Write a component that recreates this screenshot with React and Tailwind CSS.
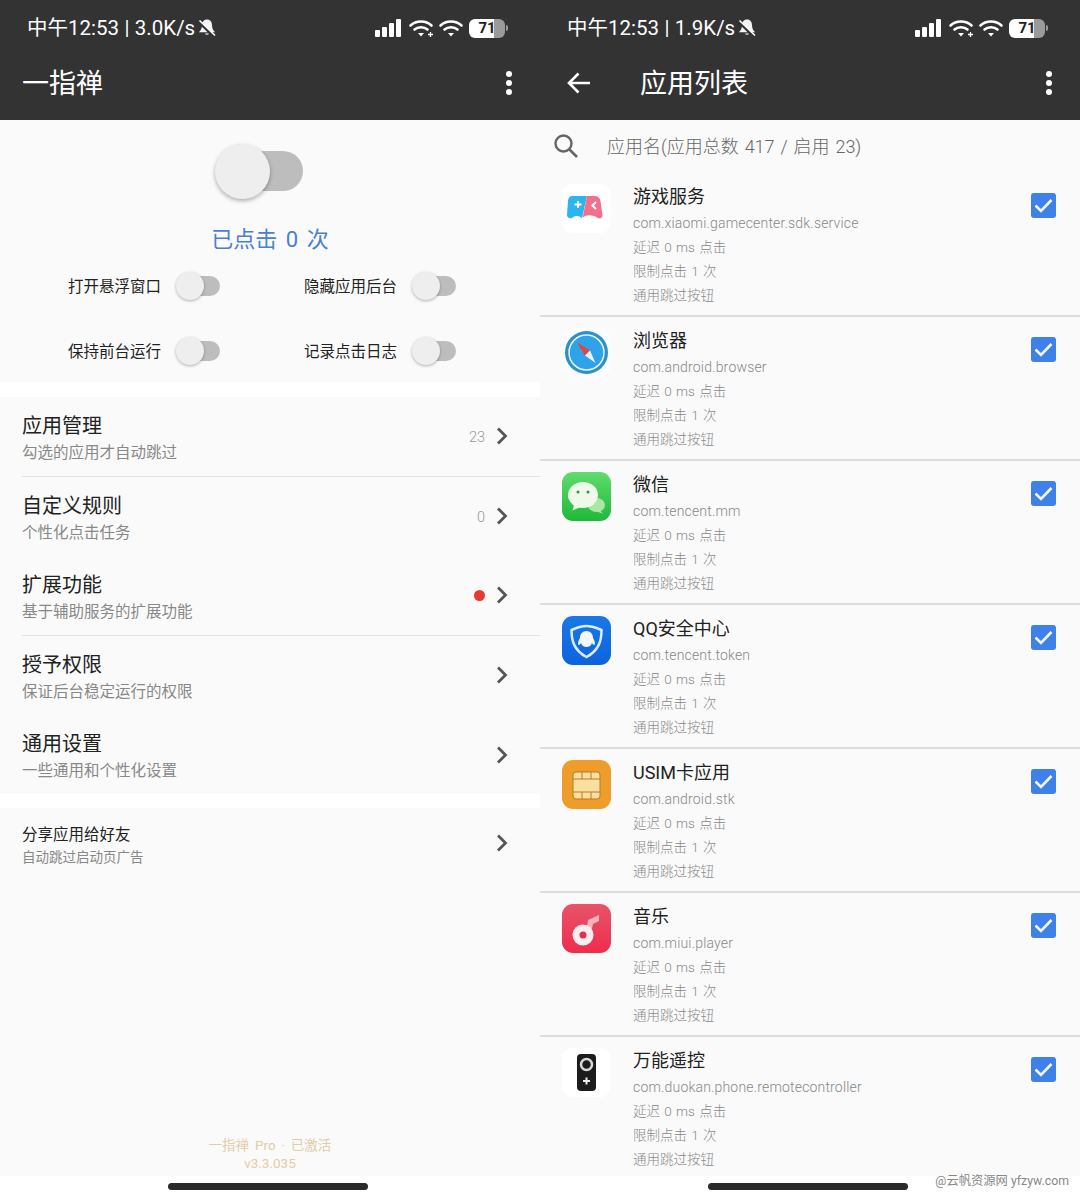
import React from "react";

const Dots = () => (
  <div className="flex flex-col gap-[3px]">
    <div className="w-[6px] h-[6px] rounded-full bg-white" />
    <div className="w-[6px] h-[6px] rounded-full bg-white" />
    <div className="w-[6px] h-[6px] rounded-full bg-white" />
  </div>
);

const MuteBell = () => (
  <svg width="20" height="20" viewBox="0 0 20 20" className="ml-[2px]">
    <path d="M10 1.500c-3.400 0-5 2.700-5 5.800 0 3.400-1.500 5.300-3.200 6.900h16.400c-1.700-1.600-3.200-3.500-3.200-6.900 0-3.100-1.600-5.800-5-5.800z" fill="#f4f4f4" />
    <path d="M7.800 15.400a2.400 2.400 0 0 0 4.400 0z" fill="#f4f4f4" />
    <path d="M2 4 L17 18.500" stroke="#333" strokeWidth="3" />
    <path d="M2.500 2.500 L18 17.500" stroke="#fff" strokeWidth="1.600" />
  </svg>
);

const Wifi = ({ plus }) => (
  <svg width="26" height="20" viewBox="0 0 26 20" fill="none">
    <path d="M2.500 7.500C8 2.200 18 2.200 23.500 7.500" stroke="#fff" strokeWidth="2.600" strokeLinecap="round" />
    <path d="M6.500 11.500C10 8.400 16 8.400 19.500 11.500" stroke="#fff" strokeWidth="2.600" strokeLinecap="round" />
    <path d="M10 15h6l-3 3.600z" fill="#fff" />
    {plus && <path d="M20 16.500h5M22.500 14v5" stroke="#fff" strokeWidth="1.300" />}
  </svg>
);

const Signal = () => (
  <div className="flex items-end gap-[2px] h-[18px] mr-[3px]">
    <div className="w-[5px] h-[7px] bg-white rounded-[1px]" />
    <div className="w-[5px] h-[10px] bg-white rounded-[1px]" />
    <div className="w-[5px] h-[14px] bg-white rounded-[1px]" />
    <div className="w-[5px] h-[18px] bg-white rounded-[1px]" />
  </div>
);

const StatusBar = ({ speed }) => (
  <div className="flex items-center h-[55px] pl-[27px] pr-[32px] pt-[1px]">
    <span className="text-[20.500px] leading-none text-white [word-spacing:0.300px]">中午12:53 | {speed}</span>
    <MuteBell />
    <div className="ml-auto flex items-center gap-[4px]">
      <Signal />
      <Wifi plus />
      <Wifi />
      <div className="flex items-center justify-center w-[36px] h-[19px] rounded-[6px] bg-[linear-gradient(90deg,#fff_70%,#9a9a9a_70%)] ml-[1px]">
        <span className="text-[15px] leading-none font-bold text-[#222]">71</span>
      </div>
      <div className="w-[2px] h-[6px] -ml-[3px] rounded-r-full bg-[#9a9a9a]" />
    </div>
  </div>
);

const Toggle = ({ big }) =>
  big ? (
    <div className="relative w-[88px] h-[56px] flex items-center">
      <div className="absolute right-0 w-[60px] h-[40px] rounded-full bg-[#bdbdbd]" />
      <div className="absolute left-0 w-[55px] h-[55px] rounded-full bg-[#eeeeee] shadow-[0_2px_4px_rgba(0,0,0,0.3)]" />
    </div>
  ) : (
    <div className="relative w-[44px] h-[28px] flex items-center">
      <div className="absolute right-0 w-[30px] h-[20px] rounded-full bg-[#bdbdbd]" />
      <div className="absolute left-0 w-[28px] h-[28px] rounded-full bg-[#eeeeee] shadow-[0_1px_3px_rgba(0,0,0,0.3)]" />
    </div>
  );

const Option = ({ label }) => (
  <div className="flex items-center h-[28px]">
    <span className="w-[108px] mt-[3px] text-[15.500px] leading-none text-[#222]">{label}</span>
    <Toggle />
  </div>
);

const Chevron = () => (
  <svg width="12" height="18" viewBox="0 0 12 18" fill="none">
    <path d="M2 1.500 L9.500 9 L2 16.500" stroke="#555" strokeWidth="2.800" />
  </svg>
);

const MenuRow = ({ title, sub, right, border }) => (
  <div className={`flex items-center h-[79.5px] ml-[22px] pr-[32px] ${border ? "border-b border-[#e2e2e2]" : ""}`}>
    <div className="flex flex-col pt-[3px]">
      <span className="text-[20px] leading-[28px] text-[#222]">{title}</span>
      <span className="text-[15.500px] leading-[22px] mt-[2px] text-[#888]">{sub}</span>
    </div>
    <div className="ml-auto flex items-center gap-[11px]">
      {right}
      <Chevron />
    </div>
  </div>
);

const Count = ({ n }) => <span className="mt-[3px] text-[14.500px] leading-none text-[#999] font-light">{n}</span>;

const HomeBar = () => (
  <div className="h-[24px] shrink-0 bg-white flex justify-center pt-[7px] pr-[4px]">
    <div className="w-[200px] h-[7px] rounded-full bg-[#2b2b2b]" />
  </div>
);

const LeftPanel = () => (
  <div className="flex flex-col w-[540px] h-[1200px] bg-white">
    <div className="bg-[#333333] h-[120px] shrink-0">
      <StatusBar speed="3.0K/s" />
      <div className="flex items-center justify-between h-[55px] pl-[22px] pr-[28px]">
        <span className="text-[27px] leading-none text-white mt-[3px]">一指禅</span>
        <Dots />
      </div>
    </div>
    <div className="bg-[#fafafa] h-[262px] shrink-0 flex flex-col items-center pt-[23px]">
      <div className="mr-[22px]">
        <Toggle big />
      </div>
      <div className="mt-[26px] text-[22px] leading-[30px] text-[#4a80d2] [word-spacing:3px]">已点击 0 次</div>
      <div className="mt-[17px] w-full pl-[68px] grid grid-cols-[236px_1fr] gap-y-[37px]">
        <Option label="打开悬浮窗口" />
        <Option label="隐藏应用后台" />
        <Option label="保持前台运行" />
        <Option label="记录点击日志" />
      </div>
    </div>
    <div className="mt-[15px] bg-[#fafafa] h-[397px] shrink-0">
      <MenuRow title="应用管理" sub="勾选的应用才自动跳过" right={<Count n="23" />} border />
      <MenuRow title="自定义规则" sub="个性化点击任务" right={<Count n="0" />} />
      <MenuRow title="扩展功能" sub="基于辅助服务的扩展功能" right={<div className="w-[11px] h-[11px] rounded-full bg-[#e53a2f]" />} border />
      <MenuRow title="授予权限" sub="保证后台稳定运行的权限" />
      <MenuRow title="通用设置" sub="一些通用和个性化设置" />
    </div>
    <div className="mt-[14px] bg-[#fafafa] flex-1 flex flex-col">
      <div className="flex items-center h-[71px] pl-[22px] pr-[32px]">
        <div className="flex flex-col pt-[3px]">
          <span className="text-[15.500px] leading-[22px] text-[#222]">分享应用给好友</span>
          <span className="text-[13.500px] leading-[20px] mt-[1px] text-[#888]">自动跳过启动页广告</span>
        </div>
        <div className="ml-auto mb-[2px]">
          <Chevron />
        </div>
      </div>
      <div className="mt-auto mb-[4px] flex flex-col items-center text-[13.500px] leading-[18px] text-[#e3cda6] [word-spacing:2.500px]">
        <span>一指禅 Pro · 已激活</span>
        <span>v3.3.035</span>
      </div>
    </div>
    <HomeBar />
  </div>
);

const GameIcon = () => (
  <svg width="49" height="49" viewBox="0 0 49 49">
    <rect width="49" height="49" rx="11" fill="#fff" />
    <path d="M10 12h15l-5 22c-3-2-6-3-10 0-3 1-5-1-5-3l1-14c0-3 2-5 4-5z" fill="#2bb5ee" />
    <path d="M25 12h8c3 0 5 2 5.500 5l2 14c0 3-2 4-5 3-4-3-11-4-15 0z" fill="#f2708c" />
    <path d="M12.500 20.500h7M16 17v7" stroke="#fff" strokeWidth="2" />
    <path d="M34 18l-3.500 3.500 3.500 3.500" stroke="#fff" strokeWidth="2" fill="none" />
  </svg>
);

const CompassIcon = () => (
  <svg width="49" height="49" viewBox="0 0 49 49">
    <rect width="49" height="49" rx="11" fill="#fafcff" />
    <circle cx="24.500" cy="24.500" r="21.500" fill="#2a8fca" />
    <circle cx="24.500" cy="24.500" r="17.500" fill="#2ea3ea" stroke="#e8f5fd" strokeWidth="1.500" />
    <path d="M15 14.500 L28 22.500 L23 27.500 z" fill="#e8423a" />
    <path d="M33.500 35 L23 27.500 L28 22.500 z" fill="#e8f2fa" />
  </svg>
);

const WeChatIcon = () => (
  <svg width="49" height="49" viewBox="0 0 49 49">
    <defs>
      <linearGradient id="wx" x1="0" y1="0" x2="0" y2="1">
        <stop offset="0" stopColor="#5fdc6d" />
        <stop offset="1" stopColor="#1fb83a" />
      </linearGradient>
    </defs>
    <rect width="49" height="49" rx="11" fill="url(#wx)" />
    <ellipse cx="34.500" cy="33" rx="8.500" ry="7" fill="#a9e8a4" />
    <path d="M38 38l2.500 3.500-6-2z" fill="#a9e8a4" />
    <ellipse cx="21" cy="23" rx="15" ry="13" fill="#eef9ea" />
    <path d="M12 33l-1.500 5.500 8-3.500z" fill="#eef9ea" />
    <circle cx="16" cy="20" r="1.500" fill="#3a8f4a" />
    <circle cx="26" cy="20" r="1.500" fill="#3a8f4a" />
  </svg>
);

const QQIcon = () => (
  <svg width="49" height="49" viewBox="0 0 49 49">
    <defs>
      <linearGradient id="qq" x1="0" y1="0" x2="0" y2="1">
        <stop offset="0" stopColor="#1a78e6" />
        <stop offset="1" stopColor="#0d63dc" />
      </linearGradient>
    </defs>
    <rect width="49" height="49" rx="11" fill="url(#qq)" />
    <path d="M24.500 10c6 0 10 2 15 4 0 10-2 20-15 27-13-7-15-17-15-27 5-2 9-4 15-4z" fill="none" stroke="#dcecff" strokeWidth="2.500" />
    <path d="M24.500 15c4 0 6.500 3 6.500 7 2 3 2.500 6 1.500 7-1 0-2-1-2.500-2-1 3-3.500 4-5.500 4s-4.500-1-5.500-4c-.5 1-1.500 2-2.500 2-1-1-.5-4 1.500-7 0-4 2.500-7 6.500-7z" fill="#f4f8ff" />
  </svg>
);

const SimIcon = () => (
  <svg width="49" height="49" viewBox="0 0 49 49">
    <rect width="49" height="49" rx="11" fill="#ee9d2b" />
    <rect x="11" y="12" width="27" height="27" rx="3" fill="#fbdf9f" stroke="#b9782a" strokeWidth="1" />
    <path d="M11 19h9v-7M38 19h-9v-7M20 19h9M11 32h27M20 32v7M29 32v7" stroke="#b9782a" strokeWidth="1" fill="none" />
  </svg>
);

const MusicIcon = () => (
  <svg width="49" height="49" viewBox="0 0 49 49">
    <defs>
      <linearGradient id="mu" x1="0" y1="0" x2="0" y2="1">
        <stop offset="0" stopColor="#e8546a" />
        <stop offset="1" stopColor="#ee2c4e" />
      </linearGradient>
    </defs>
    <rect width="49" height="49" rx="11" fill="url(#mu)" />
    <path d="M26 16l11-5v6l-6 3-2 9h-5z" fill="#f7b3bb" />
    <circle cx="21" cy="31" r="10.500" fill="#fbeef0" />
    <circle cx="21" cy="31" r="3.500" fill="#e0304c" />
  </svg>
);

const RemoteIcon = () => (
  <svg width="49" height="49" viewBox="0 0 49 49">
    <rect width="49" height="49" rx="11" fill="#fff" />
    <rect x="15" y="6" width="19" height="37" rx="4" fill="#1c1c1c" />
    <circle cx="24.500" cy="16.500" r="5.500" fill="none" stroke="#d8d8d8" strokeWidth="2.500" />
    <path d="M21 33h7M24.500 29.500v7" stroke="#eee" strokeWidth="2" />
  </svg>
);

const Check = () => (
  <div className="w-[25px] h-[25px] rounded-[3px] bg-[#3f82e6] flex items-center justify-center">
    <svg width="21" height="17" viewBox="0 0 21 17" fill="none">
      <path d="M2.500 8.500 L8 14 L18.500 3" stroke="#f2f6fd" strokeWidth="2.600" />
    </svg>
  </div>
);

const apps = [
  { name: "游戏服务", pkg: "com.xiaomi.gamecenter.sdk.service", Icon: GameIcon },
  { name: "浏览器", pkg: "com.android.browser", Icon: CompassIcon },
  { name: "微信", pkg: "com.tencent.mm", Icon: WeChatIcon },
  { name: "QQ安全中心", pkg: "com.tencent.token", Icon: QQIcon },
  { name: "USIM卡应用", pkg: "com.android.stk", Icon: SimIcon },
  { name: "音乐", pkg: "com.miui.player", Icon: MusicIcon },
  { name: "万能遥控", pkg: "com.duokan.phone.remotecontroller", Icon: RemoteIcon },
];

const AppRow = ({ name, pkg, Icon }) => (
  <div className="flex h-[144px] shrink-0 border-b-2 border-[#dddddd] pl-[22px] pr-[24px] pt-[11px]">
    <div className="shrink-0 w-[49px] h-[49px]">
      <Icon />
    </div>
    <div className="ml-[22px] flex flex-col pt-[1px]">
      <span className="text-[18px] leading-[24px] text-[#222]">{name}</span>
      <span className="text-[14px] leading-[24px] mt-[2px] text-[#888] font-light tracking-[0.18px]">{pkg}</span>
      <span className="text-[13.500px] leading-[24px] text-[#888] font-light [word-spacing:1px]">延迟 0 ms 点击</span>
      <span className="text-[13.500px] leading-[24px] text-[#888] font-light [word-spacing:1px]">限制点击 1 次</span>
      <span className="text-[13.500px] leading-[24px] text-[#888] font-light">通用跳过按钮</span>
    </div>
    <div className="ml-auto mt-[9px]">
      <Check />
    </div>
  </div>
);

const RightPanel = () => (
  <div className="relative flex flex-col w-[540px] h-[1200px] bg-white">
    <div className="bg-[#333333] h-[120px] shrink-0">
      <StatusBar speed="1.9K/s" />
      <div className="flex items-center h-[55px] pl-[26px] pr-[28px]">
        <svg width="26" height="24" viewBox="0 0 26 24" fill="none">
          <path d="M24 12H3M12.500 2.500 L3 12 L12.500 21.500" stroke="#fff" strokeWidth="2.600" />
        </svg>
        <span className="ml-[48px] mt-[3px] text-[27px] leading-none text-white">应用列表</span>
        <div className="ml-auto">
          <Dots />
        </div>
      </div>
    </div>
    <div className="flex-1 min-h-0 overflow-hidden bg-[#fafafa] flex flex-col">
      <div className="flex items-center h-[53px] shrink-0 pl-[13px] pb-[1px]">
        <svg width="26" height="26" viewBox="0 0 26 26" fill="none">
          <circle cx="10.500" cy="10.500" r="8" stroke="#666" strokeWidth="2.400" />
          <path d="M16.500 16.500 L24 24" stroke="#666" strokeWidth="2.600" />
        </svg>
        <span className="ml-[28px] mt-[1px] text-[18px] leading-none text-[#666] font-light [word-spacing:1.500px]">应用名(应用总数 417 / 启用 23)</span>
      </div>
      {apps.map((a) => (
        <AppRow key={a.pkg} {...a} />
      ))}
    </div>
    <HomeBar />
    <span className="absolute right-[11px] top-[1173px] text-[12.300px] leading-[16px] text-[#888]">@云帆资源网 yfzyw.com</span>
  </div>
);

export default function App() {
  return (
    <div className="flex w-[1080px] h-[1200px] overflow-hidden font-['Roboto','Noto_Sans_CJK_SC',sans-serif]">
      <LeftPanel />
      <RightPanel />
    </div>
  );
}
